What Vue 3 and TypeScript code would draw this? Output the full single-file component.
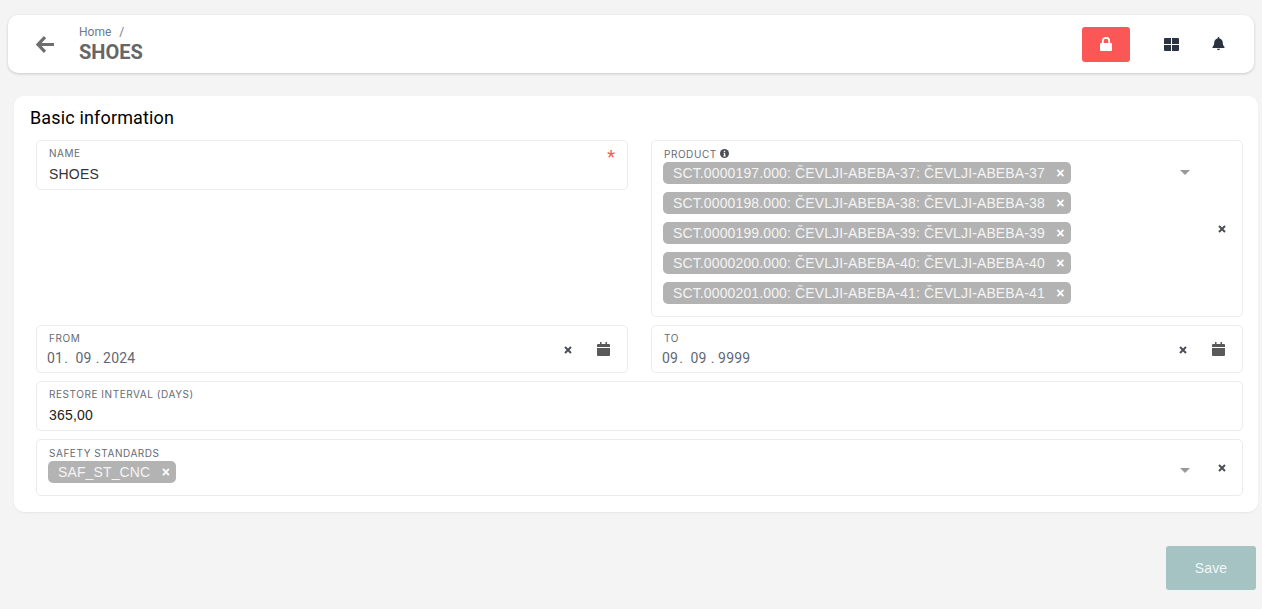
<script setup lang="ts">
const products: string[] = ['37', '38', '39', '40', '41'].map(
  (n, i) => `SCT.0000${197 + i}.000: ČEVLJI-ABEBA-${n}: ČEVLJI-ABEBA-${n}`
)
</script>

<template>
  <div class="page">
    <header class="topbar">
      <svg class="back" viewBox="0 0 18 17" width="18" height="17" aria-hidden="true">
        <path d="M9 1.200 2 8.500 9 15.800M2.500 8.500H18" fill="none" stroke="#6e6e6e" stroke-width="3.200" />
      </svg>
      <div class="crumbs">
        <div class="trail"><span>Home</span><i>/</i></div>
        <div class="heading">SHOES</div>
      </div>
      <button class="lock" aria-label="lock">
        <svg viewBox="0 0 12 14" width="12" height="14">
          <path d="M2.800 6.500V4a3.200 3.200 0 0 1 6.400 0v2.500" fill="none" stroke="#fff" stroke-width="1.800" />
          <rect x="0" y="6" width="12" height="8" rx="1" fill="#fff" />
        </svg>
      </button>
      <svg class="grid-icon" viewBox="0 0 15 13" width="15" height="13">
        <path d="M0 1a1 1 0 0 1 1-1h6v6H0zM8 0h6a1 1 0 0 1 1 1v5H8zM0 7h7v6H1a1 1 0 0 1-1-1zM8 7h7v5a1 1 0 0 1-1 1H8z" fill="#2c3340" />
      </svg>
      <svg class="bell" viewBox="0 0 14 16" width="13" height="14">
        <path d="M7 0a1 1 0 0 1 1 1v.7c2.500.5 3.900 2.500 3.900 5 0 2.700 1 3.600 2 4.800.3.400 0 1-.5 1H.6c-.5 0-.8-.6-.5-1 1-1.200 2-2.100 2-4.800 0-2.500 1.400-4.500 3.900-5V1a1 1 0 0 1 1-1zM5.300 13.500h3.400a1.700 1.700 0 0 1-3.400 0z" fill="#2c3340" />
      </svg>
    </header>

    <main class="card">
      <h2>Basic information</h2>
      <div class="form">
        <div class="field name">
          <div class="label-row"><label>NAME</label><span class="req">*</span></div>
          <div class="value">SHOES</div>
        </div>

        <div class="field product">
          <div class="product-main">
            <label class="info-label">PRODUCT
              <svg viewBox="0 0 10 10" width="9" height="9">
                <circle cx="5" cy="5" r="5" fill="#4a4f57" />
                <path d="M4.200 2h1.600v1.400H4.200zM4 4.300h1.800v3h.6v.9H3.700v-.9h.6V5.200H4z" fill="#fff" />
              </svg>
            </label>
            <div class="chips">
              <div v-for="p in products" :key="p" class="chip">
                <span>{{ p }}</span><b class="chip-x">×</b>
              </div>
            </div>
          </div>
          <span class="caret product-caret"></span>
          <span class="clear product-clear"><svg viewBox="0 0 8 8" width="8" height="8"><path d="M1 1l6 6M7 1 1 7" stroke="#4b4f55" stroke-width="2" /></svg></span>
        </div>

        <div class="field date">
          <div class="date-main">
            <label>FROM</label>
            <div class="date-value">01<em class="d1">.</em>09<em class="d2">.</em>2024</div>
          </div>
          <span class="clear"><svg viewBox="0 0 8 8" width="8" height="8"><path d="M1 1l6 6M7 1 1 7" stroke="#4b4f55" stroke-width="2" /></svg></span>
          <svg class="cal" viewBox="0 0 13 14" width="13" height="14"><path d="M3 0h1.500v2h4V0H10v2h2a1 1 0 0 1 1 1v2H0V3a1 1 0 0 1 1-1h2zM0 6h13v7a1 1 0 0 1-1 1H1a1 1 0 0 1-1-1z" fill="#595959" /></svg>
        </div>

        <div class="field date">
          <div class="date-main">
            <label>TO</label>
            <div class="date-value">09<em class="d1">.</em>09<em class="d2">.</em>9999</div>
          </div>
          <span class="clear"><svg viewBox="0 0 8 8" width="8" height="8"><path d="M1 1l6 6M7 1 1 7" stroke="#4b4f55" stroke-width="2" /></svg></span>
          <svg class="cal" viewBox="0 0 13 14" width="13" height="14"><path d="M3 0h1.500v2h4V0H10v2h2a1 1 0 0 1 1 1v2H0V3a1 1 0 0 1 1-1h2zM0 6h13v7a1 1 0 0 1-1 1H1a1 1 0 0 1-1-1z" fill="#595959" /></svg>
        </div>

        <div class="field wide restore">
          <label>RESTORE INTERVAL (DAYS)</label>
          <div class="value amount">365,00</div>
        </div>

        <div class="field wide safety">
          <div class="safety-main">
            <label>SAFETY STANDARDS</label>
            <div class="chip safety-chip"><span>SAF_ST_CNC</span><b class="chip-x">×</b></div>
          </div>
          <span class="caret safety-caret"></span>
          <span class="clear safety-clear"><svg viewBox="0 0 8 8" width="8" height="8"><path d="M1 1l6 6M7 1 1 7" stroke="#4b4f55" stroke-width="2" /></svg></span>
        </div>
      </div>
    </main>

    <footer class="actions"><button class="save">Save</button></footer>
  </div>
</template>

<style>
html, body { margin: 0; background: #f4f4f4; }
</style>

<style scoped>
.page {
  width: 1262px;
  height: 609px;
  box-sizing: border-box;
  padding-top: 15px;
  overflow: hidden;
  background: #f4f4f4;
  font-family: Roboto, sans-serif;
}
.topbar {
  margin: 0 8px;
  height: 58px;
  background: #fff;
  border-radius: 10px;
  box-shadow: 0 1px 3px rgba(0, 0, 0, .18);
  display: flex;
  align-items: center;
}
.back { margin-left: 28px; }
.crumbs { margin-left: 25px; flex: 1; }
.trail { font-size: 12px; line-height: 14px; color: #6c7a90; display: flex; gap: 8px; margin-top: 1px; }
.trail i { font-style: normal; }
.heading { font-size: 20px; font-weight: 700; line-height: 24px; color: #666; margin-top: 1px; }
.lock {
  width: 48px; height: 35px; padding: 0; border: 0; border-radius: 3px;
  background: #fb5757; display: flex; align-items: center; justify-content: center;
}
.grid-icon { margin-left: 34px; }
.bell { margin-left: 33px; margin-right: 29px; }

.card {
  margin: 23px 4px 0 14px;
  height: 416px;
  box-sizing: border-box;
  background: #fff;
  border-radius: 10px;
  box-shadow: 0 1px 2px rgba(0, 0, 0, .06);
  padding: 11px 15px 0 16px;
}
h2 { margin: 0; font-size: 18px; font-weight: 400; line-height: 21px; letter-spacing: .15px; color: #000; }
.form {
  margin: 12px 0 0 6px;
  display: grid;
  grid-template-columns: 592px 592px;
  column-gap: 23px;
  row-gap: 8px;
  grid-template-rows: 177px 48px 50px 57px;
}
.field {
  box-sizing: border-box;
  border: 1px solid #ececec;
  border-radius: 5px;
  background: #fff;
}
.wide { grid-column: 1 / 3; }
label {
  display: block;
  font-family: Inter, sans-serif;
  font-size: 10px;
  height: 12px;
  line-height: 10px;
  letter-spacing: .55px;
  color: #666b75;
}
.name { height: 50px; padding: 7px 12px 0; }
.label-row { display: flex; justify-content: space-between; }
.req { color: #fb5757; font-size: 18px; line-height: 18px; height: 12px; }
.value {
  font-family: "Liberation Sans", Arial, sans-serif;
  font-size: 14px; line-height: 16px; letter-spacing: .2px; color: #333; margin-top: 6px;
}

.product { display: flex; padding: 8px 0 0 11px; }
.product-main { width: 486px; }
.info-label { display: flex; align-items: flex-start; gap: 3px; margin-left: 1px; }
.chips { display: flex; flex-direction: column; align-items: flex-start; gap: 8px; margin-top: 1px; }
.chip {
  display: inline-flex;
  align-items: center;
  height: 22px;
  box-sizing: border-box;
  padding: 0 6px 0 10px;
  border-radius: 5px;
  background: #b3b3b3;
  color: #f4f4f4;
  font-family: "Liberation Sans", Arial, sans-serif;
  font-size: 14px;
  letter-spacing: .125px;
}
.chip-x { margin-left: 11px; font-size: 14px; font-weight: 700; color: #fff; width: 9px; text-align: center; letter-spacing: 0; }
.caret {
  width: 0; height: 0;
  border-left: 5px solid transparent;
  border-right: 5px solid transparent;
  border-top: 5.500px solid #999;
}
.product-caret { margin: 21px 0 0 31px; }
.clear { display: flex; }
.product-clear { margin: 76px 0 0 28px; }

.date { display: flex; align-items: center; padding-left: 10px; }
.date-main { flex: 1; align-self: flex-start; padding-top: 7px; }
.date-main label { margin-left: 2px; }
.date-value { font-size: 14px; line-height: 16px; letter-spacing: .2px; color: #5f6873; margin-top: 5px; }
.date-value em { font-style: normal; }
.d1 { margin: 0 7.500px 0 1px; }
.d2 { margin: 0 3.500px 0 4px; }
.cal { margin: 0 17px 0 25px; }
.date .clear { margin-top: 1px; }

.restore { padding: 7px 12px 0; }
.amount { margin-top: 6px; color: #222; }

.safety { display: flex; padding: 8px 0 0 11px; }
.safety-main { flex: 1; }
.safety-main label { margin-left: 1px; }
.safety-chip { margin-top: 1px; }
.safety-caret { margin: 20px 28px 0 0; }
.safety-clear { margin: 16px 16px 0 0; height: 8px; }

.actions { display: flex; justify-content: flex-end; margin: 34px 6px 0 0; }
.save {
  width: 90px; height: 44px; border: 0; border-radius: 3px;
  background: #a5c3c2; color: #f2f6f6;
  font-family: "Liberation Sans", Arial, sans-serif; font-size: 14px; letter-spacing: .1px;
}
</style>
